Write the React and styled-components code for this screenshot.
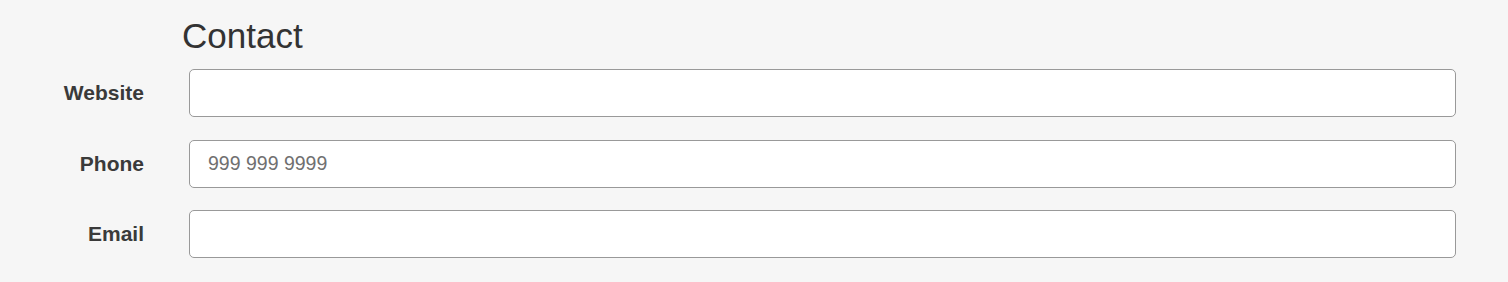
import React from "react";
import styled, { createGlobalStyle } from "styled-components";

const Global = createGlobalStyle`
  html, body { margin: 0; padding: 0; background: #f6f6f6; }
  body { font-family: "Liberation Sans", Arial, sans-serif; }
`;

const Page = styled.div`
  background: #f6f6f6;
  height: 282px;
  box-sizing: border-box;
  padding: 16px 52px 0 0;
`;

const Heading = styled.h2`
  margin: 0 0 14px 182px;
  font-size: 35px;
  line-height: 39px;
  font-weight: 400;
  color: #333;
`;

const Form = styled.div`
  display: grid;
  grid-template-columns: 144px 1fr;
  column-gap: 45px;
  row-gap: 22.5px;
  align-items: center;
`;

const Label = styled.label`
  text-align: right;
  font-size: 21px;
  font-weight: 700;
  color: #3a3a3a;
`;

const Input = styled.input`
  box-sizing: border-box;
  height: 48px;
  width: 100%;
  border: 1px solid #999;
  border-radius: 5px;
  background: #fff;
  padding: 0 18px;
  font-family: "Liberation Sans", Arial, sans-serif;
  font-size: 19.5px;
  color: #333;
  outline: none;
  &::placeholder { color: #707070; }
`;

export default function App() {
  return (
    <>
      <Global />
      <Page>
        <Heading>Contact</Heading>
        <Form>
          <Label htmlFor="w">Website</Label>
          <Input id="w" type="text" />
          <Label htmlFor="p">Phone</Label>
          <Input id="p" type="tel" placeholder="999 999 9999" />
          <Label htmlFor="e">Email</Label>
          <Input id="e" type="email" />
        </Form>
      </Page>
    </>
  );
}
